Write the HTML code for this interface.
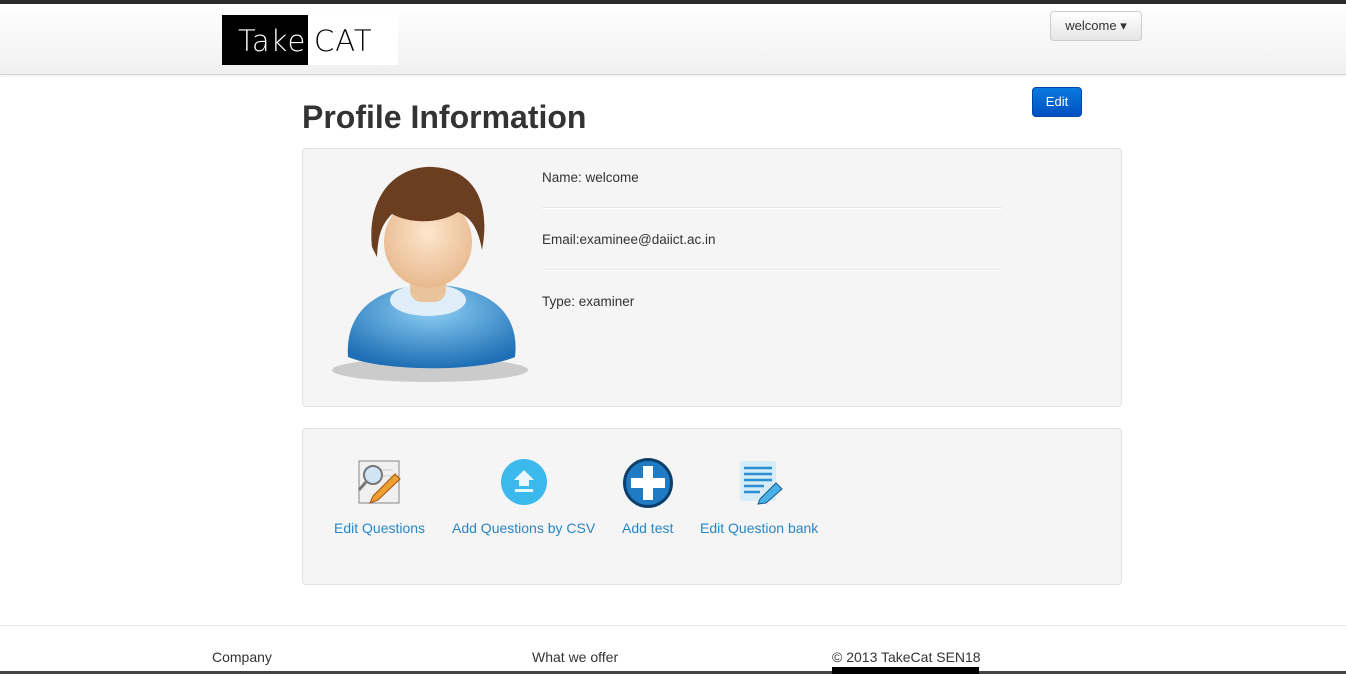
<!DOCTYPE html>
<html><head><style>
body{margin:0;width:1346px;height:674px;overflow:hidden;background:#fff;font-family:"Liberation Sans",sans-serif;position:relative}
.top{position:absolute;left:0;top:0;width:1346px;height:4px;background:#2b2b2b}
.nav{position:absolute;left:0;top:4px;width:1346px;height:70px;background:linear-gradient(#fff,#f0f0f0);border-bottom:1px solid #d4d4d4;box-shadow:0 1px 3px rgba(0,0,0,.08)}
.logo{position:absolute;left:222px;top:15px;width:176px;height:50px;background:#fff}
.logo .b{position:absolute;left:0;top:0;width:86px;height:50px;background:#000}
.logo span{position:absolute;top:9px;font-size:29px;font-family:"DejaVu Sans",sans-serif;font-weight:200;letter-spacing:1px}
.wb{position:absolute;left:1050px;top:11px;width:90px;height:28px;border:1px solid #ccc;border-radius:4px;background:linear-gradient(#fff,#e6e6e6);font-size:13px;color:#333;text-align:center;line-height:28px}
h1{position:absolute;left:302px;top:99px;margin:0;font-size:32px;font-weight:bold;color:#333}
.edit{position:absolute;left:1032px;top:87px;width:48px;height:28px;border-radius:4px;background:linear-gradient(#0a7ae0,#0050c0);border:1px solid #0044aa;color:#fff;font-size:13px;text-align:center;line-height:28px}
.well{position:absolute;left:302px;width:818px;background:#f5f5f5;border:1px solid #e3e3e3;border-radius:4px}
.f{position:absolute;left:542px;font-size:13.5px;color:#333}
.hr{position:absolute;left:542px;width:460px;height:1px;background:#e6e6e6;border-bottom:1px solid #fff}
.lk{position:absolute;top:520px;font-size:14px;color:#2a85c5}
.ft{position:absolute;top:649px;font-size:14px;color:#333}
</style></head><body>
<div class="top"></div>
<div class="nav"></div>
<div class="logo"><div class="b"></div><span style="left:16px;color:#fff">Take</span><span style="left:92px;color:#000">CAT</span></div>
<div class="wb">welcome ▾</div>
<h1>Profile Information</h1>
<div class="edit">Edit</div>
<div class="well" style="top:148px;height:257px"></div>
<svg style="position:absolute;left:330px;top:162px" width="205" height="225" viewBox="0 0 205 225">
<defs><radialGradient id="sh" cx="50%" cy="30%" r="70%"><stop offset="0" stop-color="#8fd0f5"/><stop offset="1" stop-color="#1e6fb5"/></radialGradient>
<radialGradient id="fc" cx="50%" cy="40%" r="60%"><stop offset="0" stop-color="#fde6cd"/><stop offset="1" stop-color="#e8b98e"/></radialGradient></defs>
<ellipse cx="100" cy="208" rx="98" ry="12" fill="#999" opacity=".45"/>
<path d="M18 195 C15 150 45 125 100 122 C160 125 190 150 185 195 C150 210 55 210 18 195Z" fill="url(#sh)"/>
<ellipse cx="98" cy="138" rx="38" ry="16" fill="#dfeef8"/>
<rect x="80" y="100" width="36" height="40" rx="12" fill="#e8c39c"/>
<ellipse cx="98" cy="80" rx="44" ry="46" fill="url(#fc)"/>
<path d="M42 85 C36 30 70 3 103 5 C140 7 162 35 152 88 C148 65 140 55 128 50 C110 62 80 62 62 52 C52 62 48 72 47 95Z" fill="#6b3e22"/>
</svg>
<div class="f" style="top:170px">Name: welcome</div>
<div class="hr" style="top:207px"></div>
<div class="f" style="top:232px">Email:examinee@daiict.ac.in</div>
<div class="hr" style="top:269px"></div>
<div class="f" style="top:294px">Type: examiner</div>
<div class="well" style="top:428px;height:155px"></div>
<svg style="position:absolute;left:355px;top:458px" width="48" height="48"><rect x="4" y="3" width="40" height="42" fill="#f0f0f0" stroke="#888"/><line x1="10" y1="12" x2="38" y2="12" stroke="#ccc"/><line x1="10" y1="18" x2="38" y2="18" stroke="#ccc"/><circle cx="18" cy="17" r="9" fill="#cfe4f5" stroke="#777" stroke-width="2"/><line x1="11" y1="24" x2="4" y2="32" stroke="#777" stroke-width="3"/><path d="M18 38 L40 16 L45 21 L23 42 L15 45Z" fill="#f0a030" stroke="#a05010"/></svg>
<svg style="position:absolute;left:500px;top:458px" width="48" height="48"><circle cx="24" cy="24" r="23" fill="#3cb9ec"/><path d="M24 12 L34 22 L29 22 L29 28 L19 28 L19 22 L14 22Z M15 31 H33 V34 H15Z" fill="#e8f7fd"/></svg>
<svg style="position:absolute;left:622px;top:457px" width="52" height="52"><circle cx="26" cy="26" r="25" fill="#0d3f6e"/><circle cx="26" cy="26" r="22" fill="#1f7bc4"/><path d="M21 9 H31 V21 H43 V31 H31 V43 H21 V31 H9 V21 H21Z" fill="#fff"/></svg>
<svg style="position:absolute;left:738px;top:459px" width="46" height="46"><rect x="2" y="2" width="36" height="40" rx="3" fill="#d6ecf8"/><g stroke="#2a8fd0" stroke-width="2.5"><line x1="6" y1="9" x2="34" y2="9"/><line x1="6" y1="15" x2="34" y2="15"/><line x1="6" y1="21" x2="34" y2="21"/><line x1="6" y1="27" x2="26" y2="27"/><line x1="6" y1="33" x2="22" y2="33"/></g><path d="M22 40 L38 24 L44 30 L28 44 L20 45Z" fill="#4ab0e8" stroke="#1a5a8a"/></svg>
<div class="lk" style="left:334px">Edit Questions</div>
<div class="lk" style="left:452px">Add Questions by CSV</div>
<div class="lk" style="left:622px">Add test</div>
<div class="lk" style="left:700px">Edit Question bank</div>
<div style="position:absolute;left:0;top:625px;width:1346px;height:1px;background:#e8e8e8"></div>
<div class="ft" style="left:212px">Company</div>
<div class="ft" style="left:532px">What we offer</div>
<div class="ft" style="left:832px">© 2013 TakeCat SEN18</div>
<div style="position:absolute;left:0;top:671px;width:1346px;height:3px;background:#444"></div>
<div style="position:absolute;left:832px;top:667px;width:147px;height:7px;background:#000"></div>
</body></html>
